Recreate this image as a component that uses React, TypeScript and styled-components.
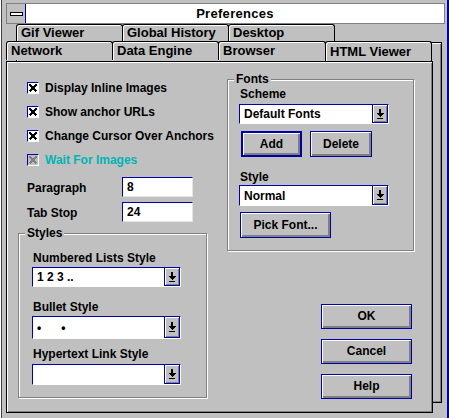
import styled, { createGlobalStyle } from "styled-components";

const NAVY = "#0000a8";

const GlobalStyle = createGlobalStyle`
  html, body {
    margin: 0;
    padding: 0;
    background: #c0c0c0;
  }
  body {
    font-family: "Liberation Sans", Arial, sans-serif;
  }
`;

const DownArrow = () => (
  <svg width="8" height="10" viewBox="0 0 8 10" shapeRendering="crispEdges">
    <rect x="3" y="0" width="2" height="4" fill="#000" />
    <path d="M0 4h8l-4 4z" fill="#000" />
    <rect x="1" y="9" width="6" height="1" fill="#000" />
  </svg>
);

const CrossMark = ({ color }: { color: string }) => (
  <svg width="10" height="10" viewBox="0 0 10 10" shapeRendering="crispEdges">
    <path d="M1.5 1.5L8.5 8.5M8.5 1.5L1.5 8.5" stroke={color} strokeWidth="2" />
  </svg>
);

type ComboProps = { text?: string; w: number; h: number };

const ComboBox = ({ text, w, h }: ComboProps) => (
  <Combo $w={w} $h={h}>
    <ComboText>{text}</ComboText>
    <DropButton>
      <DownArrow />
    </DropButton>
  </Combo>
);

const Check = ({ label, disabled }: { label: string; disabled?: boolean }) => (
  <CheckRow $disabled={disabled}>
    <CheckBox $disabled={disabled}>
      <CrossMark color={disabled ? "#808080" : "#000"} />
    </CheckBox>
    {label}
  </CheckRow>
);

export default function App() {
  return (
    <>
      <GlobalStyle />
      <Window>
        <TitleBar>
          <SysMenu>
            <SysDash />
          </SysMenu>
          <Caption>Preferences</Caption>
        </TitleBar>

        <TabStack>
          <BackLayer>
            <TabRow $h={18}>
              <Tab $w={107} $lh={16}>Gif Viewer</Tab>
              <Tab $w={107} $lh={16}>Global History</Tab>
              <Tab $w={107} $lh={16}>Desktop</Tab>
            </TabRow>
            <BackPanel />
          </BackLayer>

          <FrontLayer>
            <TabRow $h={20}>
              <Tab $w={107} $lh={18}>Network</Tab>
              <Tab $w={107} $lh={18}>Data Engine</Tab>
              <Tab $w={108} $lh={18}>Browser</Tab>
              <Tab $w={107} $lh={19} $active>HTML Viewer</Tab>
            </TabRow>

            <Panel>
              <Column>
                <CheckList>
                  <Check label="Display Inline Images" />
                  <Check label="Show anchor URLs" />
                  <Check label="Change Cursor Over Anchors" />
                  <Check label="Wait For Images" disabled />
                </CheckList>

                <FieldList>
                  <FieldRow>
                    <FieldLabel>Paragraph</FieldLabel>
                    <TextBox>8</TextBox>
                  </FieldRow>
                  <FieldRow>
                    <FieldLabel>Tab Stop</FieldLabel>
                    <TextBox>24</TextBox>
                  </FieldRow>
                </FieldList>

                <Group $top={11}>
                  <GroupTitle>Styles</GroupTitle>
                  <GroupBody $pt={11} $pb={12} $pl={13}>
                    <ComboLabel $mb={2}>Numbered Lists Style</ComboLabel>
                    <ComboBox text="1 2 3 .." w={149} h={20} />
                    <ComboLabel $mt={13} $mb={2}>Bullet Style</ComboLabel>
                    <ComboBox text="•      •" w={149} h={23} />
                    <ComboLabel $mt={8} $mb={3}>Hypertext Link Style</ComboLabel>
                    <ComboBox w={149} h={21} />
                  </GroupBody>
                </Group>
              </Column>

              <Column>
                <Group $top={3}>
                  <GroupTitle>Fonts</GroupTitle>
                  <GroupBody $pt={1} $pb={12} $pl={11}>
                    <ComboLabel $mb={3}>Scheme</ComboLabel>
                    <ComboBox text="Default Fonts" w={150} h={20} />
                    <ButtonRow>
                      <Button $w={61} $h={26} $default>Add</Button>
                      <Button $w={62} $h={26}>Delete</Button>
                    </ButtonRow>
                    <ComboLabel $mt={13} $mb={1}>Style</ComboLabel>
                    <ComboBox text="Normal" w={150} h={21} />
                    <PickRow>
                      <Button $w={91} $h={26}>Pick Font...</Button>
                    </PickRow>
                  </GroupBody>
                </Group>

                <ButtonStack>
                  <Button $w={91} $h={25}>OK</Button>
                  <Button $w={91} $h={25}>Cancel</Button>
                  <Button $w={91} $h={25}>Help</Button>
                </ButtonStack>
              </Column>
            </Panel>
          </FrontLayer>
        </TabStack>
      </Window>
    </>
  );
}

const Window = styled.div`
  width: 449px;
  height: 418px;
  box-sizing: border-box;
  padding: 3px 2px 0 5px;
  background: #c0c0c0;
  border-left: 1px solid #fff;
  border-right: 2px solid ${NAVY};
  box-shadow: inset 1px 0 0 #404040;
  font: bold 12px "Liberation Sans", Arial, sans-serif;
  color: #000;
  overflow: hidden;
`;

const TitleBar = styled.div`
  display: flex;
  width: 439px;
  height: 21px;
  box-sizing: border-box;
  border: 1px solid #808080;
`;

const SysMenu = styled.div`
  width: 18px;
  background: #c0c0c0;
  border-right: 1px solid ${NAVY};
  display: flex;
  align-items: center;
  justify-content: center;
`;

const SysDash = styled.div`
  width: 11px;
  height: 2px;
  border: 1px solid #000;
  background: #fff;
`;

const Caption = styled.div`
  flex: 1;
  background: #fff;
  text-align: center;
  font-size: 13px;
  letter-spacing: 0.3px;
  line-height: 19px;
`;

const TabStack = styled.div`
  display: grid;
  grid-template: 1fr / 1fr;
  width: 436px;
  height: 389px;
`;

const BackLayer = styled.div`
  grid-area: 1 / 1;
  margin: 0 0 10px 10px;
  display: flex;
  flex-direction: column;
`;

const FrontLayer = styled.div`
  grid-area: 1 / 1;
  margin: 17px 9px 0 0;
  display: flex;
  flex-direction: column;
`;

const TabRow = styled.div<{ $h: number }>`
  display: flex;
  align-items: flex-start;
  height: ${(p) => p.$h}px;
  padding-left: 1px;
`;

const Tab = styled.div<{ $w: number; $lh: number; $active?: boolean }>`
  position: relative;
  z-index: ${(p) => (p.$active ? 2 : 1)};
  width: ${(p) => p.$w}px;
  margin-left: -1px;
  box-sizing: border-box;
  padding-left: 4px;
  background: #c0c0c0;
  border: 1px solid #000;
  border-bottom: none;
  border-radius: 3px 3px 0 0;
  box-shadow: inset 1px 1px 0 #fff;
  font-size: 13px;
  line-height: ${(p) => p.$lh}px;
  white-space: nowrap;
`;

const BackPanel = styled.div`
  flex: 1;
  background: #c0c0c0;
  border: 1px solid #000;
  box-shadow: inset 1px 1px 0 #fff, inset -1px -1px 0 #808080;
`;

const Panel = styled.div`
  flex: 1;
  display: grid;
  grid-template-columns: 189px 187px;
  column-gap: 20px;
  align-items: start;
  padding: 14px 0 0 11px;
  background: #c0c0c0;
  border: 1px solid #000;
  box-shadow: inset 1px 1px 0 #fff, inset -1px -1px 0 #808080;
`;

const Column = styled.div`
  display: flex;
  flex-direction: column;
`;

const CheckList = styled.div`
  display: flex;
  flex-direction: column;
  padding-left: 9px;
`;

const CheckRow = styled.div<{ $disabled?: boolean }>`
  display: flex;
  align-items: center;
  gap: 6px;
  height: 24px;
  white-space: nowrap;
  color: ${(p) => (p.$disabled ? "#00b4b4" : "#000")};
`;

const CheckBox = styled.div<{ $disabled?: boolean }>`
  width: 12px;
  height: 12px;
  box-sizing: border-box;
  display: flex;
  align-items: center;
  justify-content: center;
  background: ${(p) => (p.$disabled ? "#c0c0c0" : "#fff")};
  border: 1px solid;
  border-color: ${NAVY} #fff #fff ${NAVY};
`;

const FieldList = styled.div`
  display: flex;
  flex-direction: column;
  gap: 5px;
  margin-top: 5px;
  padding-left: 9px;
`;

const FieldRow = styled.div`
  display: flex;
  align-items: center;
  height: 20px;
`;

const FieldLabel = styled.div`
  width: 95px;
  padding-top: 2px;
`;

const TextBox = styled.div`
  width: 71px;
  height: 20px;
  box-sizing: border-box;
  padding-left: 4px;
  background: #fff;
  border: 1px solid;
  border-color: ${NAVY} #e4e4e4 #e4e4e4 ${NAVY};
  line-height: 18px;
`;

const Group = styled.div<{ $top: number }>`
  margin-top: ${(p) => p.$top}px;
  border: 1px solid #808080;
  box-shadow: 1px 1px 0 #fff, inset 1px 1px 0 #fff;
`;

const GroupTitle = styled.div`
  width: fit-content;
  margin: -8px 0 0 6px;
  padding: 0 2px;
  background: #c0c0c0;
  line-height: 14px;
`;

const GroupBody = styled.div<{ $pt: number; $pb: number; $pl: number }>`
  display: flex;
  flex-direction: column;
  align-items: flex-start;
  padding: ${(p) => `${p.$pt}px 0 ${p.$pb}px ${p.$pl}px`};
`;

const ComboLabel = styled.div<{ $mt?: number; $mb?: number }>`
  margin-top: ${(p) => p.$mt ?? 0}px;
  margin-bottom: ${(p) => p.$mb ?? 0}px;
  padding-left: 1px;
  line-height: 14px;
`;

const Combo = styled.div<{ $w: number; $h: number }>`
  display: flex;
  width: ${(p) => p.$w}px;
  height: ${(p) => p.$h}px;
  box-sizing: border-box;
  background: #fff;
  border: 1px solid;
  border-color: ${NAVY} #fff #fff ${NAVY};
`;

const ComboText = styled.div`
  flex: 1;
  display: flex;
  align-items: center;
  padding-left: 4px;
  white-space: pre;
`;

const DropButton = styled.div`
  width: 16px;
  box-sizing: border-box;
  display: flex;
  align-items: center;
  justify-content: center;
  background: #c0c0c0;
  border: 1px solid ${NAVY};
  border-top: none;
  box-shadow: inset 1px 1px 0 #fff, inset -1px -1px 0 #808080;
`;

const ButtonRow = styled.div`
  display: flex;
  gap: 8px;
  margin: 7px 0 0 2px;
`;

const PickRow = styled.div`
  margin: 6px 0 0 1px;
`;

const ButtonStack = styled.div`
  display: flex;
  flex-direction: column;
  gap: 10px;
  margin: 53px 0 0 94px;
`;

const Button = styled.div<{ $w: number; $h: number; $default?: boolean }>`
  width: ${(p) => p.$w}px;
  height: ${(p) => p.$h}px;
  box-sizing: border-box;
  display: flex;
  align-items: center;
  justify-content: center;
  padding-bottom: 1px;
  background: #c0c0c0;
  border: ${(p) => (p.$default ? 2 : 1)}px solid ${NAVY};
  box-shadow: inset 1px 1px 0 #fff, inset -2px -2px 0 #808080;
  white-space: nowrap;
`;
